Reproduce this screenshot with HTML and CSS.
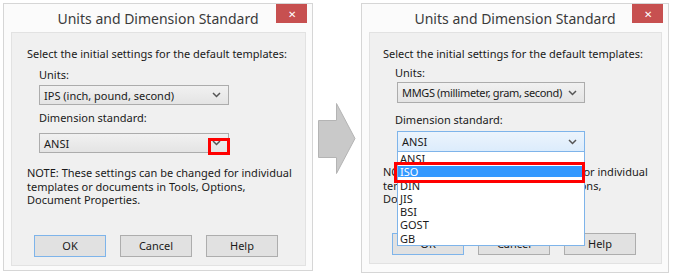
FILE: index.html
```html
<!DOCTYPE html>
<html lang="en">
<head>
    <meta charset="UTF-8">
    <title>Units and Dimension Standard</title>
    <link rel="stylesheet" href="styles.css">
</head>
<body>
    <div class="dialog left">
        <div class="titlebar">
            <span class="title">Units and Dimension Standard</span>
            <span class="close">&#x2715;</span>
        </div>
        <div class="panel">
            <p class="intro">Select the initial settings for the default templates:</p>
            <div class="field units">
                <label>Units:</label>
                <div class="combo"><span>IPS (inch, pound, second)</span><svg class="chev" width="9" height="6" viewBox="0 0 9 6"><path d="M1 1l3.5 3.5L8 1" fill="none" stroke="#555" stroke-width="1.5"/></svg></div>
            </div>
            <div class="field dims">
                <label>Dimension standard:</label>
                <div class="combo"><span>ANSI</span><svg class="chev" width="9" height="6" viewBox="0 0 9 6"><path d="M1 1l3.5 3.5L8 1" fill="none" stroke="#555" stroke-width="1.5"/></svg>
                    <div class="mark arrow-mark"></div>
                </div>
            </div>
            <p class="note">NOTE: These settings can be changed for individual<br>templates or documents in Tools, Options,<br>Document Properties.</p>
            <div class="buttons">
                <button class="default">OK</button>
                <button>Cancel</button>
                <button>Help</button>
            </div>
        </div>
    </div>

    <div class="arrow">
        <svg width="38" height="72" viewBox="0 0 38 72"><path d="M0.5 17.5h18V0.5L37 35.5 18.5 70.5V54.5H0.5z" fill="#c9c9c9" stroke="#b4b4b4"/></svg>
    </div>

    <div class="dialog right">
        <div class="titlebar">
            <span class="title">Units and Dimension Standard</span>
            <span class="close">&#x2715;</span>
        </div>
        <div class="panel">
            <p class="intro">Select the initial settings for the default templates:</p>
            <div class="field units">
                <label>Units:</label>
                <div class="combo"><span class="tight">MMGS (millimeter, gram, second)</span><svg class="chev" width="9" height="6" viewBox="0 0 9 6"><path d="M1 1l3.5 3.5L8 1" fill="none" stroke="#555" stroke-width="1.5"/></svg></div>
            </div>
            <div class="field dims">
                <label>Dimension standard:</label>
                <div class="combo focused"><span>ANSI</span><svg class="chev" width="9" height="6" viewBox="0 0 9 6"><path d="M1 1l3.5 3.5L8 1" fill="none" stroke="#555" stroke-width="1.5"/></svg>
                    <ul class="list">
                        <li>ANSI</li>
                        <li class="selected">ISO</li>
                        <li>DIN</li>
                        <li>JIS</li>
                        <li>BSI</li>
                        <li>GOST</li>
                        <li>GB</li>
                    </ul>
                    <div class="mark iso-mark"></div>
                </div>
            </div>
            <p class="note">NOTE: These settings can be changed for individual<br>templates or documents in Tools, Options,<br>Document Properties.</p>
            <div class="buttons">
                <button class="default">OK</button>
                <button>Cancel</button>
                <button>Help</button>
            </div>
        </div>
    </div>
</body>
</html>
```

FILE: styles.css
```css
/* Page */
body {
    margin: 0;
    padding: 3px 0 0 3px;
    background: #ffffff;
    font-family: "Noto Sans", "Open Sans", sans-serif;
    font-size: 11px;
    color: #1a1a1a;
    display: flex;
    align-items: flex-start;
}

/* Dialog frame */
.dialog {
    width: 308px;
    height: 266px;
    border: 1px solid #d6d6d6;
    background: #fbfbfb;
    display: flex;
    flex-direction: column;
}
.dialog.right {
    width: 306px;
    height: 268px;
}
.titlebar {
    height: 28px;
    display: flex;
    align-items: center;
    justify-content: center;
    position: relative;
}
.title {
    font-size: 14px;
    color: #3a3a3a;
    margin-top: 1px;
}
.close {
    position: absolute;
    right: 5px;
    top: 0;
    width: 31px;
    height: 19px;
    background: #c75050;
    color: #ffffff;
    font-size: 10px;
    display: flex;
    align-items: center;
    justify-content: center;
}

/* Inner panel */
.panel {
    flex: 1;
    margin: 0 6px 4px 7px;
    border: 1px solid #e2e2e2;
    background: #f0f0f0;
    padding: 13px 0 0 15px;
    position: relative;
}
.right .panel {
    padding-left: 13px;
    margin-bottom: 8px;
}
p {
    margin: 0;
    line-height: 15px;
}
.field {
    margin-left: 12px;
}
.field label {
    display: block;
    line-height: 15px;
}
.left .units { margin-top: 6px; }
.left .units label { margin-bottom: 3px; }
.left .dims { margin-top: 5px; }
.left .dims label { margin-bottom: 8px; }
.right .units { margin-top: 4px; }
.right .units label { margin-bottom: 2px; }
.right .dims { margin-top: 9px; }
.right .dims label { margin-bottom: 4px; }

/* Combo box */
.combo {
    width: 190px;
    height: 20px;
    border: 1px solid #acacac;
    background: linear-gradient(#f1f1f1, #e4e4e4);
    display: flex;
    align-items: center;
    justify-content: space-between;
    padding: 0 7px 0 4px;
    box-sizing: border-box;
    position: relative;
}
.combo span {
    white-space: nowrap;
}
.combo .tight {
    letter-spacing: -0.35px;
}
.right .combo {
    width: 188px;
    height: 21px;
    margin-left: 2px;
}
.combo.focused {
    border-color: #7eb4ea;
    background: linear-gradient(#ecf4fc, #dcecfc);
}

/* Dropdown list */
.list {
    position: absolute;
    left: -1px;
    top: 19px;
    width: 188px;
    height: 95px;
    margin: 0;
    padding: 0;
    list-style: none;
    background: #ffffff;
    border: 1px solid #7eb4ea;
    box-sizing: border-box;
    overflow: hidden;
}
.list li {
    height: 13.3px;
    line-height: 13.3px;
    padding-left: 2px;
}
.list li.selected {
    color: #ffffff;
    background: linear-gradient(transparent 1px, #3399ff 1px, #3399ff 12px, transparent 12px);
}

/* Red highlight marks */
.mark {
    position: absolute;
    border: 3px solid #ff0000;
    box-sizing: border-box;
}
.arrow-mark {
    right: -2px;
    top: 4px;
    width: 22px;
    height: 17px;
}
.iso-mark {
    left: -4px;
    top: 30px;
    width: 191px;
    height: 21px;
}

/* Note */
.note {
    margin-top: 13px;
    line-height: 13.5px;
}

/* Buttons */
.buttons {
    display: flex;
    gap: 14px;
    margin: 28px 0 0 7px;
}
.right .buttons {
    margin: 27px 0 0 9px;
}
button {
    width: 72px;
    height: 22px;
    border: 1px solid #adadad;
    background: #e1e1e1;
    font-family: inherit;
    font-size: 11px;
    color: #1a1a1a;
    padding: 0;
}
button.default {
    border-color: #7eb4ea;
}

/* Arrow between dialogs */
.arrow {
    width: 48px;
    display: flex;
    padding: 100px 0 0 5px;
    box-sizing: border-box;
}
```
